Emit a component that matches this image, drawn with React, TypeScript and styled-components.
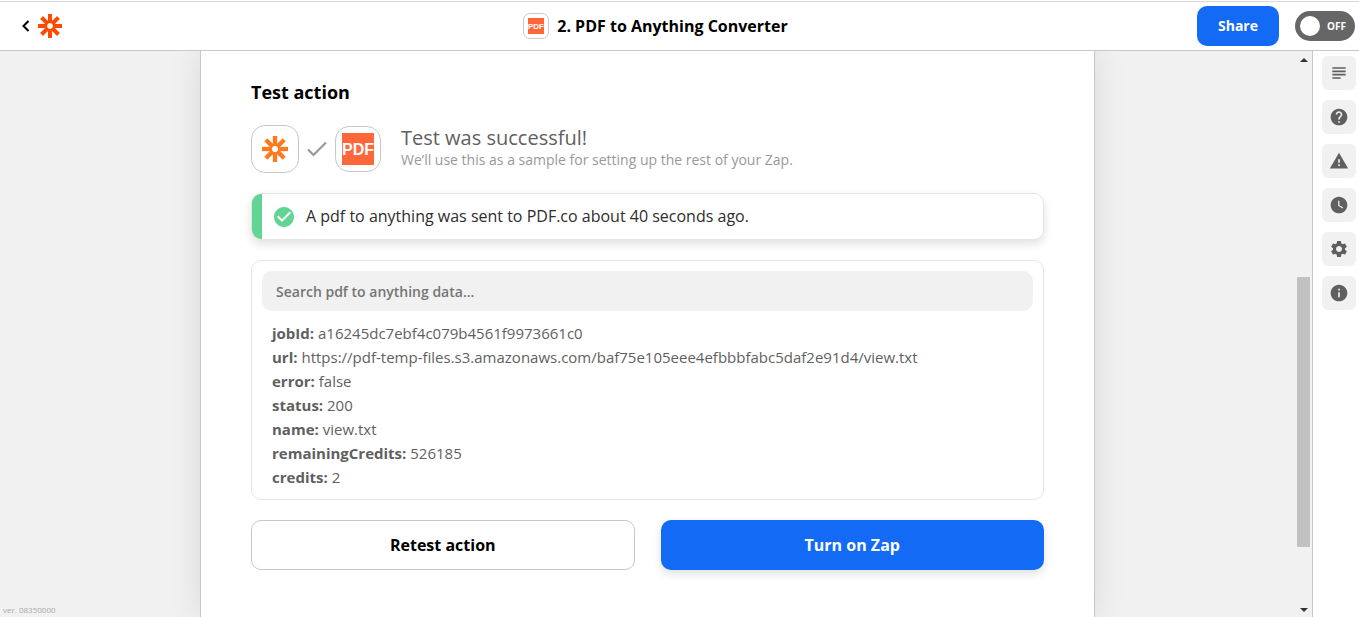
import React from 'react';
import styled, { createGlobalStyle } from 'styled-components';
import {
  MdCheckCircle,
  MdHelp,
  MdInfo,
  MdSettings,
  MdSubject,
  MdWarning,
  MdWatchLater,
} from 'react-icons/md';

const GlobalStyle = createGlobalStyle`
  *, *::before, *::after { box-sizing: border-box; }
  body {
    margin: 0;
    background: #fff;
    color: #000;
    font-family: 'Open Sans', 'Noto Sans', sans-serif;
    font-size: 15px;
  }
  button, input { font-family: inherit; }
  h1, h2, p, ul { margin: 0; padding: 0; }
`;

const Page = styled.div`
  display: flex;
  flex-direction: column;
  height: 100vh;
  padding-top: 1px;
`;

const Header = styled.header`
  flex: none;
  display: grid;
  grid-template-columns: minmax(0, 1fr) auto minmax(0, 1fr) 48px;
  align-items: center;
  height: 50px;
  border-top: 1px solid #d8d8d8;
  border-bottom: 1px solid #c8c8c8;
  background: #fff;
`;

const HomeLink = styled.a`
  display: flex;
  align-items: center;
  gap: 6px;
  padding-left: 20px;
  color: #000;
  svg { display: block; }
`;

const Title = styled.h1`
  display: flex;
  align-items: center;
  gap: 8px;
  font-size: 16px;
  line-height: 26px;
  font-weight: 700;
  white-space: nowrap;
`;

const HeaderActions = styled.div`
  grid-column: 3 / 5;
  display: flex;
  justify-content: flex-end;
  align-items: center;
  gap: 16px;
  padding-right: 4px;
`;

const ShareButton = styled.button`
  width: 82px;
  height: 40px;
  padding: 0 0 2px;
  border: 0;
  border-radius: 10px;
  background: #136bf5;
  color: #fff;
  font-size: 14px;
  font-weight: 700;
`;

const Toggle = styled.label`
  display: flex;
  align-items: center;
  gap: 7px;
  width: 60px;
  height: 30px;
  padding: 5px;
  border-radius: 15px;
  background: #666;
  color: #fff;
  font-size: 10px;
  font-weight: 700;
  input {
    appearance: none;
    flex: none;
    width: 20px;
    height: 20px;
    margin: 0;
    border-radius: 50%;
    background: #fff;
  }
`;

const Workspace = styled.div`
  flex: 1;
  min-height: 0;
  display: flex;
`;

const Canvas = styled.main`
  position: relative;
  flex: 1;
  min-width: 0;
  display: flex;
  justify-content: center;
  overflow: hidden;
  background: #f1f1f1;
`;

const Version = styled.small`
  position: absolute;
  left: 3px;
  bottom: 1px;
  font-size: 8px;
  line-height: 12px;
  color: #aaa;
`;

const Card = styled.section`
  width: 100%;
  max-width: 895px;
  padding: 29px 50px;
  border: solid #c8c8c8;
  border-width: 0 1px;
  background: #fff;
  box-shadow: 0 0 30px rgba(0, 0, 0, 0.1);
`;

const SectionTitle = styled.h2`
  margin-bottom: 21px;
  font-size: 18px;
  line-height: 24px;
  font-weight: 700;
`;

const StatusRow = styled.div`
  display: flex;
  align-items: center;
  gap: 8px;
  height: 48px;
  margin-bottom: 20px;
`;

const AppTile = styled.span<{ $size: number; $radius: number }>`
  flex: none;
  display: flex;
  align-items: center;
  justify-content: center;
  width: ${(p) => p.$size}px;
  height: ${(p) => p.$size}px;
  border: 1px solid #c8c8c8;
  border-radius: ${(p) => p.$radius}px;
  background: #fff;
`;

const StatusText = styled.div`
  padding: 0 0 2px 12px;
`;

const StatusTitle = styled.p`
  font-size: 20px;
  line-height: 24px;
  color: #5f5f5f;
`;

const StatusNote = styled.p`
  font-size: 14px;
  line-height: 20px;
  color: #999;
`;

const Banner = styled.div`
  display: flex;
  align-items: center;
  gap: 10px;
  height: 47px;
  margin-bottom: 20px;
  overflow: hidden;
  border: 1px solid #e6e6e6;
  border-radius: 10px;
  background: #fff;
  box-shadow: 0 4px 10px rgba(0, 0, 0, 0.12);
  color: #2d2d2d;
  font-size: 16px;
  line-height: 24px;
  &::before {
    content: '';
    align-self: stretch;
    width: 10px;
    background: #62d493;
  }
  svg { flex: none; color: #62d493; }
`;

const BannerText = styled.p`
  padding-bottom: 2px;
`;

const DataPanel = styled.div`
  margin-bottom: 20px;
  padding: 10px;
  border: 1px solid #e6e6e6;
  border-radius: 10px;
`;

const SearchInput = styled.input`
  display: block;
  width: 100%;
  height: 40px;
  margin-bottom: 10px;
  padding: 0 14px;
  border: 0;
  border-radius: 10px;
  background: #f1f1f1;
  color: #666;
  font-size: 14px;
  font-weight: 600;
  &::placeholder { color: #757575; opacity: 1; }
`;

const DataList = styled.ul`
  padding: 0 10px;
  list-style: none;
  font-size: 15px;
  line-height: 24px;
  color: #5f5f5f;
  b { font-weight: 700; }
`;

const ButtonRow = styled.div`
  display: grid;
  grid-template-columns: 1fr 1fr;
  gap: 26px;
`;

const ActionButton = styled.button<{ $primary?: boolean }>`
  height: 50px;
  border: ${(p) => (p.$primary ? '0' : '1px solid #c8c8c8')};
  border-radius: 10px;
  background: ${(p) => (p.$primary ? '#136bf5' : '#fff')};
  box-shadow: ${(p) => (p.$primary ? '0 4px 10px rgba(0, 0, 0, 0.12)' : 'none')};
  color: ${(p) => (p.$primary ? '#fff' : '#000')};
  font-size: 16px;
  font-weight: 700;
`;

const ScrollTrack = styled.div`
  flex: none;
  display: flex;
  flex-direction: column;
  align-items: center;
  width: 17px;
  padding: 7px 0 4px;
  background: #f1f1f1;
`;

const ScrollThumb = styled.div`
  flex: 270;
  width: 13px;
  background: #c1c1c1;
`;

const TrackSpace = styled.div<{ $share: number }>`
  flex: ${(p) => p.$share};
`;

const Rail = styled.nav`
  flex: none;
  display: flex;
  flex-direction: column;
  gap: 10px;
  padding: 5px 3px 0 9px;
  border-left: 1px solid #c8c8c8;
  background: #fff;
`;

const RailButton = styled.button`
  display: flex;
  align-items: center;
  justify-content: center;
  width: 34px;
  height: 34px;
  padding: 0;
  border: 0;
  border-radius: 6px;
  background: #f1f1f1;
  color: #5f5f5f;
`;

function ZapierMark({ size, color }: { size: number; color: string }) {
  return (
    <svg width={size} height={size} viewBox="0 0 24 24" aria-hidden="true">
      {[0, 45, 90, 135, 180, 225, 270, 315].map((angle) => (
        <rect
          key={angle}
          x="10"
          y="0"
          width="4"
          height="9.2"
          fill={color}
          transform={`rotate(${angle} 12 12)`}
        />
      ))}
    </svg>
  );
}

function PdfMark({ size }: { size: number }) {
  return (
    <svg width={size} height={size} viewBox="0 0 32 32" role="img" aria-label="PDF.co">
      <rect width="32" height="32" fill="#ff673a" />
      <text
        x="16"
        y="22"
        textAnchor="middle"
        fill="#fff"
        fontFamily="'Liberation Sans', Arial, sans-serif"
        fontSize="16"
        fontWeight="700"
      >
        PDF
      </text>
    </svg>
  );
}

function Caret({ down }: { down?: boolean }) {
  return (
    <svg width="8" height="5" viewBox="0 0 8 5" aria-hidden="true">
      <path d={down ? 'M0 0h8L4 4z' : 'M0 4h8L4 0z'} fill="#333" />
    </svg>
  );
}

const results = [
  ['jobId', 'a16245dc7ebf4c079b4561f9973661c0'],
  ['url', 'https://pdf-temp-files.s3.amazonaws.com/baf75e105eee4efbbbfabc5daf2e91d4/view.txt'],
  ['error', 'false'],
  ['status', '200'],
  ['name', 'view.txt'],
  ['remainingCredits', '526185'],
  ['credits', '2'],
];

const tools = [
  { label: 'Outline', Icon: MdSubject },
  { label: 'Help', Icon: MdHelp },
  { label: 'Alerts', Icon: MdWarning },
  { label: 'History', Icon: MdWatchLater },
  { label: 'Settings', Icon: MdSettings },
  { label: 'Info', Icon: MdInfo },
];

export default function App() {
  return (
    <Page>
      <GlobalStyle />
      <Header>
        <HomeLink href="#" aria-label="Back to Zaps">
          <svg width="12" height="14" viewBox="0 0 12 14" aria-hidden="true">
            <path d="M8.5 2 3.5 7l5 5" fill="none" stroke="currentColor" strokeWidth="2" />
          </svg>
          <ZapierMark size={24} color="#ff4a00" />
        </HomeLink>
        <Title>
          <AppTile $size={26} $radius={7}>
            <PdfMark size={16} />
          </AppTile>
          2. PDF to Anything Converter
        </Title>
        <HeaderActions>
          <ShareButton type="button">Share</ShareButton>
          <Toggle>
            <input type="checkbox" />
            OFF
          </Toggle>
        </HeaderActions>
      </Header>
      <Workspace>
        <Canvas>
          <Card>
            <SectionTitle>Test action</SectionTitle>
            <StatusRow>
              <AppTile $size={48} $radius={14}>
                <ZapierMark size={26} color="#ff7a1f" />
              </AppTile>
              <svg width="20" height="16" viewBox="0 0 20 16" aria-hidden="true">
                <path d="m1 8.5 5.5 5.5L19 1.5" fill="none" stroke="#999" strokeWidth="2.2" />
              </svg>
              <AppTile $size={46} $radius={14}>
                <PdfMark size={32} />
              </AppTile>
              <StatusText>
                <StatusTitle>Test was successful!</StatusTitle>
                <StatusNote>We’ll use this as a sample for setting up the rest of your Zap.</StatusNote>
              </StatusText>
            </StatusRow>
            <Banner role="status">
              <MdCheckCircle size={24} />
              <BannerText>A pdf to anything was sent to PDF.co about 40 seconds ago.</BannerText>
            </Banner>
            <DataPanel>
              <SearchInput
                type="text"
                aria-label="Search pdf to anything data"
                placeholder="Search pdf to anything data..."
              />
              <DataList>
                {results.map(([key, value]) => (
                  <li key={key}>
                    <b>{key}:</b> {value}
                  </li>
                ))}
              </DataList>
            </DataPanel>
            <ButtonRow>
              <ActionButton type="button">Retest action</ActionButton>
              <ActionButton type="button" $primary>
                Turn on Zap
              </ActionButton>
            </ButtonRow>
          </Card>
          <Version>ver. 08350000</Version>
        </Canvas>
        <ScrollTrack aria-hidden="true">
          <Caret />
          <TrackSpace $share={214} />
          <ScrollThumb />
          <TrackSpace $share={61} />
          <Caret down />
        </ScrollTrack>
        <Rail aria-label="Zap tools">
          {tools.map(({ label, Icon }) => (
            <RailButton key={label} type="button" aria-label={label}>
              <Icon size={20} />
            </RailButton>
          ))}
        </Rail>
      </Workspace>
    </Page>
  );
}
